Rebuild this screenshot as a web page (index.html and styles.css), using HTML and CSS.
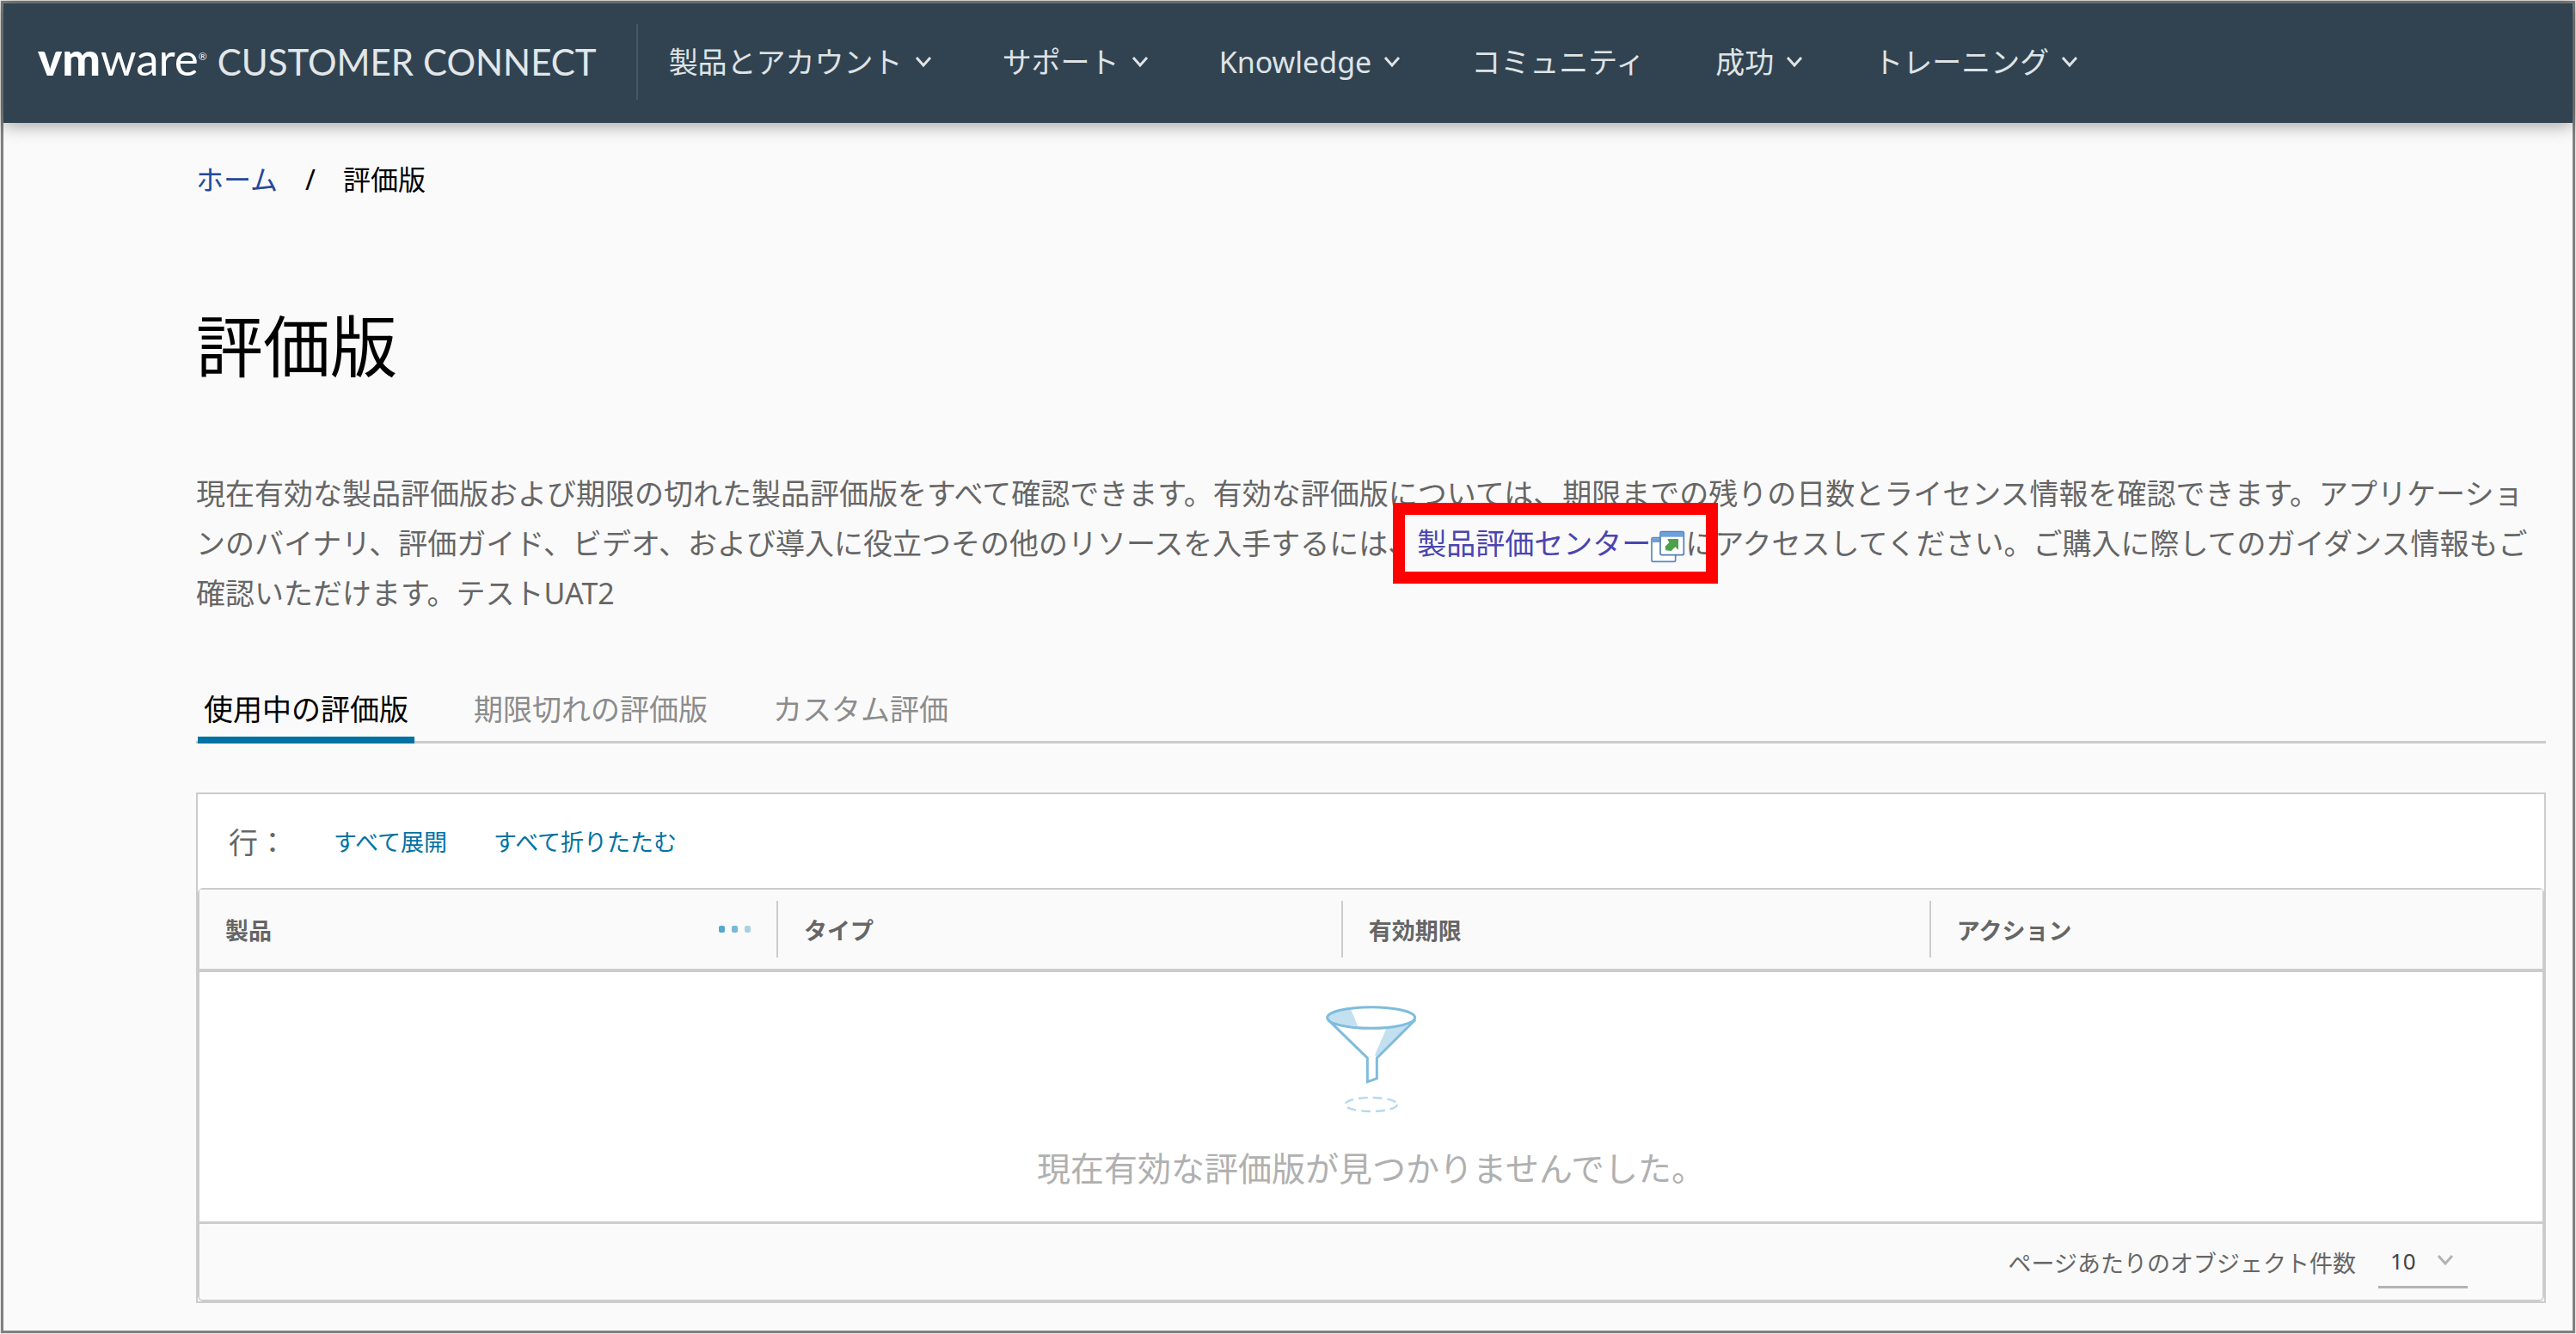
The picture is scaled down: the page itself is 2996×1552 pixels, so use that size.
FILE: index.html
```html
<!DOCTYPE html>
<html lang="ja">
<head>
    <meta charset="UTF-8">
    <meta name="viewport" content="width=device-width, initial-scale=1.0">
    <title>評価版 - VMware Customer Connect</title>
    <link rel="stylesheet" href="styles.css">
</head>
<body>
    <div class="page">
        <header class="header">
            <a class="brand" href="#">
                <span class="logo"><b>vm</b>ware<sup>®</sup></span>
                <span class="brand-name">CUSTOMER CONNECT</span>
            </a>
            <nav class="nav">
                <a href="#">製品とアカウント<svg class="chevron" viewBox="0 0 20 14"><path d="M2 2l8 9 8-9"/></svg></a>
                <a href="#">サポート<svg class="chevron" viewBox="0 0 20 14"><path d="M2 2l8 9 8-9"/></svg></a>
                <a href="#">Knowledge<svg class="chevron" viewBox="0 0 20 14"><path d="M2 2l8 9 8-9"/></svg></a>
                <a href="#">コミュニティ</a>
                <a href="#">成功<svg class="chevron" viewBox="0 0 20 14"><path d="M2 2l8 9 8-9"/></svg></a>
                <a href="#">トレーニング<svg class="chevron" viewBox="0 0 20 14"><path d="M2 2l8 9 8-9"/></svg></a>
            </nav>
        </header>

        <main class="content">
            <div class="breadcrumb">
                <a href="#">ホーム</a>
                <span>/</span>
                <span>評価版</span>
            </div>

            <h1>評価版</h1>

            <p class="intro">現在有効な製品評価版および期限の切れた製品評価版をすべて確認できます。有効な評価版については、期限までの残りの日数とライセンス情報を確認できます。アプリケーションのバイナリ、評価ガイド、ビデオ、および導入に役立つその他のリソースを入手するには、<a class="marked" href="#">製品評価センター<svg class="external" viewBox="1068 236 120 114"><rect x="1071" y="262" width="83" height="83" rx="5" fill="#fff" stroke="#5c86bd" stroke-width="5"/><path d="M1074 264h30v14h-30z" fill="#6d9fda"/><rect x="1101" y="241" width="82" height="81" rx="5" fill="#fff" stroke="#4f7dba" stroke-width="5"/><path d="M1103 242h78v17h-78z" fill="#6d9fda"/><path d="M1126 266h38v38l-11-10-14 14-19-2-2-14 14-13z" fill="#4aa34a"/></svg></a>にアクセスしてください。ご購入に際してのガイダンス情報もご確認いただけます。テストUAT2</p>

            <div class="tabs">
                <button class="tab active">使用中の評価版</button>
                <button class="tab">期限切れの評価版</button>
                <button class="tab">カスタム評価</button>
            </div>

            <div class="panel">
                <div class="toolbar">
                    <span>行：</span>
                    <button>すべて展開</button>
                    <button>すべて折りたたむ</button>
                </div>
                <div class="grid">
                    <table>
                        <thead>
                            <tr>
                                <th class="col-product"><div class="cell">製品<span class="dots"><i></i><i></i><i></i></span></div></th>
                                <th class="col-type"><div class="cell">タイプ</div></th>
                                <th class="col-expire"><div class="cell">有効期限</div></th>
                                <th><div class="cell">アクション</div></th>
                            </tr>
                        </thead>
                        <tbody>
                            <tr>
                                <td colspan="4">
                                    <div class="empty">
                                        <svg class="funnel" viewBox="120 85 336 396">
                                            <path d="M134 136q14-22 82-30l25 60q-80-5-107-30zM340 174l84-12-118 112-6-8z" fill="#c3e0f0"/>
                                            <g fill="none" stroke="#7fbcdd" stroke-width="9">
                                                <ellipse cx="287" cy="136" rx="153" ry="37"/>
                                                <path d="M137 143l137 134v83l33-12v-71l134-134"/>
                                            </g>
                                            <ellipse cx="287" cy="439" rx="91" ry="24" fill="none" stroke="#b5d9ec" stroke-width="7" stroke-dasharray="32 18"/>
                                        </svg>
                                        <p>現在有効な評価版が見つかりませんでした。</p>
                                    </div>
                                </td>
                            </tr>
                        </tbody>
                    </table>
                    <div class="footer">
                        <label for="page-size">ページあたりのオブジェクト件数</label>
                        <div class="select">
                            <select id="page-size">
                                <option>10</option>
                                <option>20</option>
                                <option>50</option>
                            </select>
                            <svg class="chevron" viewBox="0 0 20 14"><path d="M2 2l8 9 8-9"/></svg>
                        </div>
                    </div>
                </div>
            </div>
        </main>
    </div>
</body>
</html>
```
FILE: styles.css
```css
* {
    box-sizing: border-box;
}

body {
    margin: 0;
    padding: 1px;
    background: #e8e8e8;
    font-family: "Noto Sans", "Noto Sans CJK JP", sans-serif;
    font-size: 34px;
    color: #666;
}

a {
    text-decoration: none;
}

button,
select {
    font-family: inherit;
    border: 0;
    background: none;
    padding: 0;
}

.page {
    min-height: calc(100vh - 2px);
    border: 3px solid #808080;
    background: #fafafa;
}

/* header */
.header {
    display: flex;
    align-items: center;
    height: 139px;
    padding: 0 0 4px 40px;
    background: #314351;
    box-shadow: 0 2px 20px rgba(0, 0, 0, 0.4);
}

.brand {
    display: flex;
    align-items: baseline;
    gap: 12px;
    height: 88px;
    padding-right: 46px;
    border-right: 2px solid #465866;
    line-height: 80px;
    font-family: Lato, sans-serif;
    color: #fff;
}

.logo {
    font-size: 53px;
}

.logo b {
    font-weight: 900;
}

.logo sup {
    font-size: 12px;
    line-height: 0;
    vertical-align: 18px;
}

.brand-name {
    font-size: 42px;
    color: #e3e6e8;
}

.nav {
    display: flex;
    gap: 82px;
    padding-left: 36px;
}

.nav a {
    display: flex;
    align-items: center;
    gap: 14px;
    line-height: 48px;
    color: #dfe3e6;
}

.chevron {
    width: 20px;
    height: 14px;
    fill: none;
    stroke: currentColor;
    stroke-width: 3;
}

/* content */
.content {
    padding: 40px 31px 32px 224px;
}

.breadcrumb {
    display: flex;
    gap: 32px;
    font-size: 32px;
    line-height: 52px;
    color: #000;
}

.breadcrumb a {
    color: #24499a;
}

h1 {
    margin: 112px 0 86px;
    font-size: 78px;
    font-weight: 400;
    line-height: 112px;
    color: #000;
}

.intro {
    margin: 0;
    line-height: 58px;
}

.marked {
    position: relative;
    color: #4a45b0;
}

/* red frame drawn over the link */
.marked::after {
    content: "";
    position: absolute;
    top: -24px;
    right: -38px;
    bottom: -24px;
    left: -28px;
    border: 14px solid #f00;
}

.external {
    width: 40px;
    height: 38px;
    vertical-align: -10px;
}

.tabs {
    display: flex;
    gap: 62px;
    height: 76px;
    margin-top: 70px;
    padding-left: 2px;
    border-bottom: 3px solid #ccc;
}

.tab {
    height: 76px;
    padding: 0 7px;
    border-bottom: 8px solid transparent;
    font-size: 34px;
    color: #8c8c8c;
}

.tab.active {
    border-color: #0072a3;
    color: #000;
}

/* data grid */
.panel {
    margin-top: 57px;
    border: 2px solid #ccc;
    background: #fff;
}

.toolbar {
    display: flex;
    align-items: center;
    height: 109px;
    padding-left: 36px;
    gap: 54px;
}

.toolbar button {
    font-size: 27px;
    color: #0072a3;
}

.grid {
    border: 2px solid #ccc;
    border-radius: 6px;
}

table {
    width: 100%;
    border-collapse: collapse;
    table-layout: fixed;
}

th {
    height: 94px;
    padding: 0;
    border-bottom: 4px solid #ccc;
    background: #fafafa;
    font-size: 27px;
    text-align: left;
}

.col-product {
    width: 24.7%;
}

.col-type {
    width: 24.1%;
}

.col-expire {
    width: 25.1%;
}

.cell {
    display: flex;
    align-items: center;
    justify-content: space-between;
    height: 66px;
    padding: 0 30px;
    border-right: 2px solid #ccc;
}

th:last-child .cell {
    border-right: 0;
}

.dots {
    display: flex;
    gap: 8px;
}

.dots i {
    width: 7px;
    height: 8px;
    border-radius: 2px;
    background: #56a9cb;
}

.dots i:nth-child(2) {
    opacity: 0.8;
}

.dots i:nth-child(3) {
    opacity: 0.5;
}

td {
    padding: 0;
}

.empty {
    display: flex;
    flex-direction: column;
    align-items: center;
    height: 290px;
    padding-top: 36px;
}

.funnel {
    width: 112px;
    height: 132px;
}

.empty p {
    margin: 32px 0 0;
    font-size: 39px;
    line-height: 56px;
    color: #b0b0b0;
}

.footer {
    display: flex;
    align-items: center;
    justify-content: flex-end;
    gap: 26px;
    height: 91px;
    padding-right: 87px;
    border-top: 3px solid #ccc;
    border-radius: 0 0 4px 4px;
    background: #fafafa;
    font-size: 27px;
}

.select {
    position: relative;
    color: #b3b3b3;
}

.select select {
    appearance: none;
    width: 104px;
    height: 62px;
    padding-left: 14px;
    border-bottom: 3px solid #b3b3b3;
    border-radius: 0;
    font-size: 26px;
    color: #444;
}

.select .chevron {
    position: absolute;
    top: 22px;
    right: 16px;
    pointer-events: none;
}
```
